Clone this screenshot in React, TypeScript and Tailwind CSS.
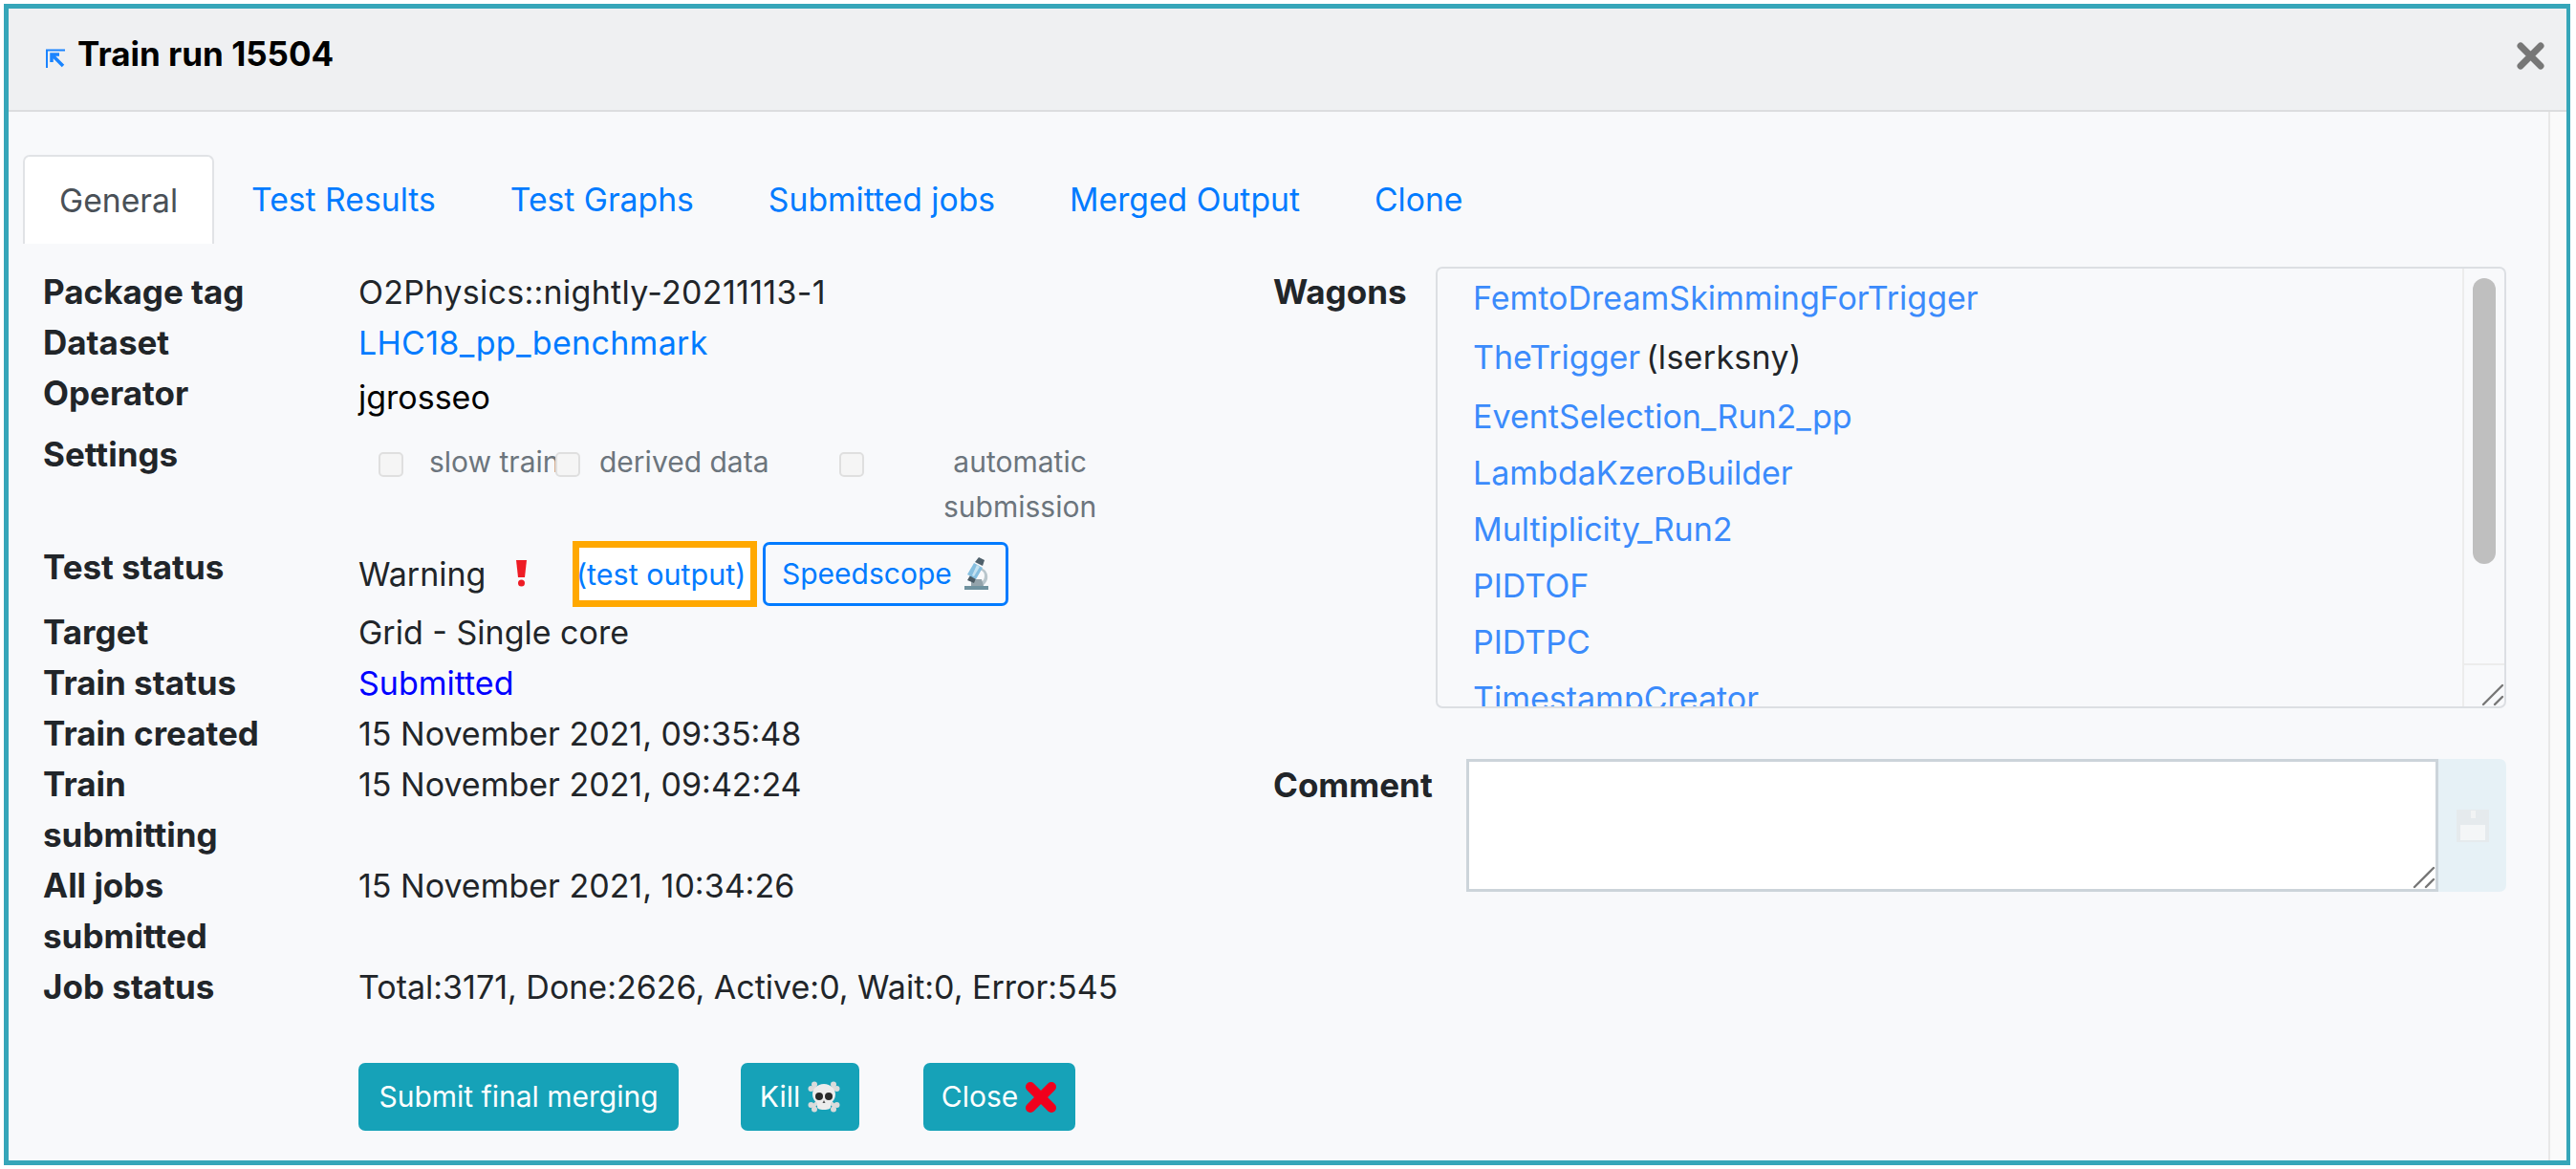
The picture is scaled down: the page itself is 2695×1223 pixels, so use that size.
import * as React from 'react'

const Row = ({ label, children, className = '' }: { label: string; children?: React.ReactNode; className?: string }) => (
    <div className={`flex ${className}`}>
        <div className="w-[250px] shrink-0 text-[35px] font-bold text-[#212529]">{label}</div>
        <div className="ml-[80px] min-w-0 flex-1 text-[#212529]">{children}</div>
    </div>
)

const Grip = ({ className = '' }: { className?: string }) => (
    <svg viewBox="0 0 24 24" className={className} fill="none" stroke="#777" strokeWidth="2.4" strokeLinecap="round">
        <path d="M2 22 22 2" />
        <path d="M14 22 22 14" />
    </svg>
)

const Check = () => <span className="h-[26px] w-[26px] shrink-0 rounded-[5px] border-2 border-[#dfdfdf] bg-[#f5f5f5]" />

const Microscope = () => (
    <svg viewBox="0 0 28 35" className="h-[35px] w-[28px]">
        <path d="M19 11c6 2 8 7 7 12-1 3-3 6-6 7h-9v-4h8c3-1 4-4 4-7 0-3-2-5-5-6z" fill="#b9c6cc" />
        <path d="M9 23h11l2 7H9z" fill="#93a3ab" />
        <path d="M2 30h25v4H2z" fill="#6f929f" />
        <path d="m5 24 3-5 6 3-2 5z" fill="#4b5a63" />
        <path d="M12 6 21 11 14 23 5 18z" fill="#86bfe0" />
        <path d="m15 8 3 2-6 10-2-1z" fill="#c5e2f1" />
        <path d="M17 0l6 3-2 6-8-4z" fill="#4f606b" />
    </svg>
)

const Skull = () => (
    <svg viewBox="0 0 34 33" className="h-[33px] w-[34px]">
        <path d="M5 6 29 27M29 6 5 27" stroke="#d9dbdb" strokeWidth="4" />
        <circle cx="3.500" cy="8" r="3" fill="#d9dbdb" />
        <circle cx="7" cy="3.500" r="3" fill="#d9dbdb" />
        <circle cx="30.500" cy="8" r="3" fill="#d9dbdb" />
        <circle cx="27" cy="3.500" r="3" fill="#d9dbdb" />
        <circle cx="3.500" cy="25" r="3" fill="#d9dbdb" />
        <circle cx="7" cy="29.500" r="3" fill="#d9dbdb" />
        <circle cx="30.500" cy="25" r="3" fill="#d9dbdb" />
        <circle cx="27" cy="29.500" r="3" fill="#d9dbdb" />
        <path d="M17 3c7 0 12 5 12 11 0 4-2 7-5 9v4c0 2-2 3-7 3s-7-1-7-3v-4c-3-2-5-5-5-9C5 8 10 3 17 3z" fill="#ececec" />
        <circle cx="12" cy="16" r="4" fill="#2a2a2a" />
        <circle cx="22" cy="16" r="4" fill="#2a2a2a" />
        <path d="M15.500 23h3L17 20z" fill="#555" />
    </svg>
)

const RedCross = () => (
    <svg viewBox="0 0 34 34" className="h-[34px] w-[34px]" stroke="#f0001c" strokeWidth="10" strokeLinecap="round">
        <path d="M6 6 28 28M28 6 6 28" />
    </svg>
)

const SaveIcon = () => (
    <svg viewBox="0 0 34 34" className="h-[34px] w-[34px]">
        <path d="M0 0h34v34H0z" fill="#e5eaed" />
        <path d="M4 16h26v16H4z" fill="#f4f6f7" />
        <path d="M15 1h5v8h-5z" fill="#f1f3f4" />
    </svg>
)

const wagons = [
    { name: 'FemtoDreamSkimmingForTrigger' },
    { name: 'TheTrigger', owner: 'lserksny' },
    { name: 'EventSelection_Run2_pp' },
    { name: 'LambdaKzeroBuilder' },
    { name: 'Multiplicity_Run2' },
    { name: 'PIDTOF' },
    { name: 'PIDTPC' },
    { name: 'TimestampCreator' },
]

const tabs = ['Test Results', 'Test Graphs', 'Submitted jobs', 'Merged Output', 'Clone']

const App = () => {
    return (
        <div className="h-[1223px] w-[2695px] overflow-hidden bg-white p-[4px] pr-[6px] font-['Inter',sans-serif] text-[34px] leading-[53px]">
            <div className="flex h-[1215px] flex-col border-[5px] border-[#36a6b9] border-r-[4px]">
                <div className="flex h-[108px] shrink-0 items-start justify-between border-b-2 border-[#dcdddf] bg-[#eff0f2] pl-[39px] pr-[23px]">
                    <div className="flex items-start pt-[23px]">
                        <svg viewBox="0 0 20 20" className="mt-[19px] h-[20px] w-[20px]" fill="none" stroke="#1a84ff">
                            <path d="M1 20V1.500h19" strokeWidth="2" />
                            <path d="M18 18 7 7M6 14V6h8" strokeWidth="3.500" />
                        </svg>
                        <span className="ml-[13px] text-[35px] font-bold leading-[48px] text-black">Train run 15504</span>
                    </div>
                    <svg viewBox="0 0 29 29" className="mt-[35px] h-[29px] w-[29px]" stroke="#777" strokeWidth="7" strokeLinecap="round">
                        <path d="M4 4 25 25M25 4 4 25" />
                    </svg>
                </div>

                <div className="flex min-h-0 flex-1 bg-[#f8f9fb]">
                    <div className="min-w-0 flex-1 pl-[15px] pr-[44px] pt-[45px]">
                        <div className="flex h-[93px] items-start text-[33.7px]">
                            <div className="flex h-[93px] items-center rounded-t-[7px] border-2 border-b-0 border-[#e1e3e6] bg-white px-[36px] text-[#495057]">
                                General
                            </div>
                            {tabs.map((t) => (
                                <div key={t} className="flex h-[93px] items-center px-[39px] text-[#007bff]">
                                    {t}
                                </div>
                            ))}
                        </div>

                        <div className="mt-[24px] flex">
                            <div className="w-[1308px] shrink-0 pl-[21px]">
                                <Row label="Package tag">
                                    <span className="tracking-[0.3px]">O2Physics::nightly-20211113-1</span>
                                </Row>
                                <Row label="Dataset">
                                    <span className="tracking-[0.3px] text-[#007bff]">LHC18_pp_benchmark</span>
                                </Row>
                                <Row label="Operator">
                                    <span className="relative top-[4px] text-black">jgrosseo</span>
                                </Row>

                                <Row label="Settings" className="mt-[11px] h-[116px]">
                                    <div className="flex items-start pl-[21px] pt-[24px] text-[30px] leading-[47px] text-[#6c757d]">
                                        <Check />
                                        <span className="ml-[27px] mt-[-13px] w-[132px] shrink-0 whitespace-nowrap">slow train</span>
                                        <Check />
                                        <span className="ml-[20px] mt-[-13px] w-[251px] shrink-0 whitespace-nowrap">derived data</span>
                                        <Check />
                                        <span className="ml-[83px] mt-[-13px] text-center">
                                            automatic
                                            <br />
                                            submission
                                        </span>
                                    </div>
                                </Row>

                                <div className="flex h-[70px]">
                                    <div className="w-[250px] shrink-0 pt-[2px] text-[35px] font-bold text-[#212529]">Test status</div>
                                    <div className="ml-[80px] flex items-center text-[#212529]">
                                        <span className="w-[165px]">Warning</span>
                                        <svg viewBox="0 0 11 28" className="h-[28px] w-[11px]">
                                            <path d="M0 0h11L9 18H2z" fill="#ee1c25" />
                                            <circle cx="5.500" cy="24" r="3.500" fill="#ee1c25" />
                                        </svg>
                                        <div className="ml-[48px] flex h-[69px] w-[193px] items-center whitespace-nowrap border-[7px] border-[#ffa800] bg-white text-[30.5px] text-[#007bff]">
                                            <span className="-ml-[3px]">(test output)</span>
                                        </div>
                                        <div className="ml-[6px] flex h-[67px] w-[257px] items-center gap-[11px] rounded-[7px] border-[3px] border-[#007bff] pl-[17px] text-[30px] text-[#007bff]">
                                            Speedscope
                                            <Microscope />
                                        </div>
                                    </div>
                                </div>

                                <Row label="Target">Grid - Single core</Row>
                                <Row label="Train status">
                                    <span className="text-[#0000ff]">Submitted</span>
                                </Row>
                                <Row label="Train created">15 November 2021, 09:35:48</Row>
                                <Row label="Train submitting">15 November 2021, 09:42:24</Row>
                                <Row label="All jobs submitted">15 November 2021, 10:34:26</Row>
                                <Row label="Job status">Total:3171, Done:2626, Active:0, Wait:0, Error:545</Row>

                                <div className="ml-[330px] mt-[53px] flex text-[30px] text-white">
                                    <div className="flex h-[71px] w-[335px] items-center justify-center rounded-[7px] bg-[#16a2b8]">
                                        Submit final merging
                                    </div>
                                    <div className="ml-[65px] flex h-[71px] w-[124px] items-center justify-center gap-[8px] rounded-[7px] bg-[#16a2b8]">
                                        Kill
                                        <Skull />
                                    </div>
                                    <div className="ml-[67px] flex h-[71px] w-[159px] items-center justify-center gap-[7px] rounded-[7px] bg-[#16a2b8]">
                                        Close
                                        <RedCross />
                                    </div>
                                </div>
                            </div>

                            <div className="min-w-0 flex-1">
                                <div className="flex h-[462px]">
                                    <div className="w-[170px] shrink-0 text-[35px] font-bold text-[#212529]">Wagons</div>
                                    <div className="flex min-w-0 flex-1 overflow-hidden rounded-[7px] border-2 border-[#dcdfe3]">
                                        <div className="min-w-0 flex-1 overflow-hidden pl-[37px] pt-[1px] text-[#3b8bfb]">
                                            {wagons.map((w) => (
                                                <div
                                                    key={w.name}
                                                    className={`h-[59px] whitespace-nowrap leading-[59px] ${w.owner ? 'my-[3px]' : ''}`}
                                                >
                                                    {w.name}
                                                    {w.owner && <span className="ml-[6px] tracking-[0.3px] text-[#212529]">({w.owner})</span>}
                                                </div>
                                            ))}
                                        </div>
                                        <div className="flex w-[44px] shrink-0 flex-col border-l-2 border-[#ececec]">
                                            <div className="flex-1 pl-[9px] pt-[10px]">
                                                <div className="h-[299px] w-[24px] rounded-full bg-[#bfbfbf]" />
                                            </div>
                                            <div className="flex h-[45px] items-end justify-end border-t-2 border-[#ececec]">
                                                <Grip className="h-[24px] w-[24px]" />
                                            </div>
                                        </div>
                                    </div>
                                </div>

                                <div className="mt-[53px] flex h-[139px]">
                                    <div className="w-[202px] shrink-0 pt-[1px] text-[35px] font-bold text-[#212529]">Comment</div>
                                    <div className="flex min-w-0 flex-1 items-end justify-end border-[3px] border-[#ccd4da] bg-white">
                                        <Grip className="h-[24px] w-[24px]" />
                                    </div>
                                    <div className="flex w-[71px] shrink-0 items-center justify-center rounded-r-[7px] bg-[#e6f1f6]">
                                        <SaveIcon />
                                    </div>
                                </div>
                            </div>
                        </div>
                    </div>

                    <div className="w-[19px] shrink-0 border-l-2 border-[#e8e8e8] bg-[#fafafa]" />
                </div>
            </div>
        </div>
    )
}

export default App
